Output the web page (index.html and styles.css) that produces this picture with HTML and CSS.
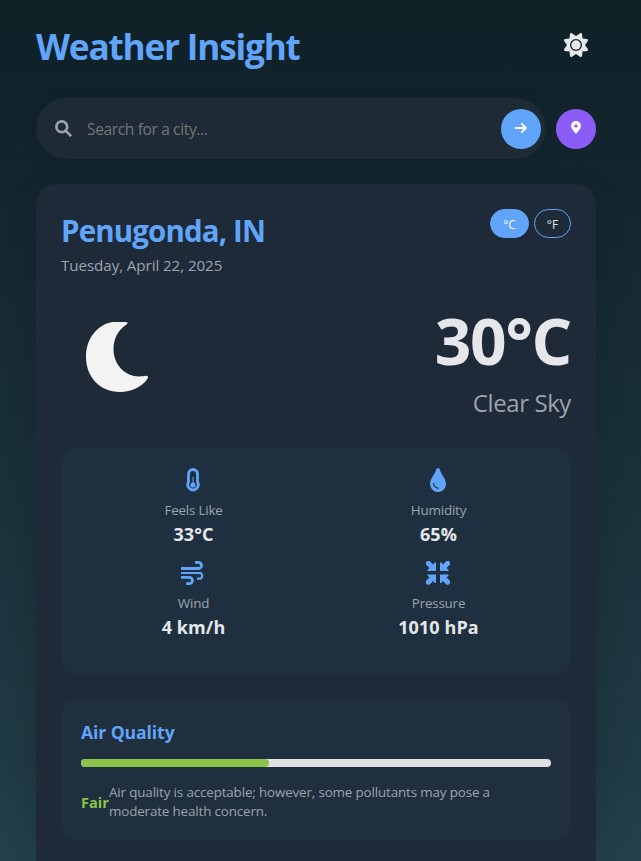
FILE: index.html
```html
<!DOCTYPE html>
<html lang="en">
<head>
<meta charset="utf-8">
<title>Weather Insight</title>
<link rel="stylesheet" href="styles.css">
</head>
<body>
<div class="container">
  <header class="header">
    <h1 class="title">Weather Insight</h1>
    <svg class="theme-icon" viewBox="0 0 24 24"><path fill="currentColor" fill-rule="evenodd" d="M6 .8Q7-.5 8 .2L12 3 16 .2Q17-.5 18 .8L18.500 5.500 23.200 6Q24.500 7 23.800 8L21 12 23.800 16Q24.500 17 23.200 18L18.500 18.500 18 23.200Q17 24.500 16 23.800L12 21 8 23.800Q7 24.500 6 23.200L5.500 18.500.8 18Q-.5 17 .2 16L3 12 .2 8Q-.5 7 .8 6L5.500 5.500zM12 6a6 6 0 1 0 0 12 6 6 0 0 0 0-12z"/><circle cx="12" cy="12" r="4.7" fill="currentColor"/></svg>
  </header>
  <div class="search-row">
    <div class="search-bar">
      <svg class="search-icon" viewBox="0 0 16 16"><circle cx="6.4" cy="6.4" r="5.1" fill="none" stroke="currentColor" stroke-width="2.6"/><path d="M10 10l5.2 5.2" stroke="currentColor" stroke-width="2.4"/></svg>
      <span class="placeholder">Search for a city...</span>
      <button class="round go"><svg width="12" height="12" viewBox="0 0 12 12"><path d="M0 6h10.5M6.3 1.3L11 6l-4.7 4.7" fill="none" stroke="#fff" stroke-width="1.8"/></svg></button>
    </div>
    <button class="round locate"><svg width="10" height="13" viewBox="0 0 10 13"><path fill="#fff" fill-rule="evenodd" d="M5 0a5 5 0 0 1 5 5c0 2.500-2.500 5-5 8C2.500 10 0 7.500 0 5a5 5 0 0 1 5-5zm0 3.300a1.700 1.700 0 1 0 0 3.400 1.700 1.700 0 0 0 0-3.400z"/></svg></button>
  </div>
  <main class="card">
    <div class="card-head">
      <div>
        <h2 class="city">Penugonda, IN</h2>
        <p class="date">Tuesday, April 22, 2025</p>
      </div>
      <div class="units"><button class="unit active">°C</button><button class="unit plain">°F</button></div>
    </div>
    <div class="current">
      <svg class="moon" viewBox="0 0 64 70"><path fill="#f3f3f3" d="M28 0h13c2 0 2 1.600.500 2.500C33 8 28.500 17 28.500 27c0 16 12 27.500 25.500 27.500 3 0 5-.500 7-.700 2-.200 2.500 1.500 1.500 3C57 65 46 70 35 70 15 70 1 55 1 35 1 16 13 2 28 0z"/></svg>
      <div class="reading"><div class="temp">30°C</div><div class="sky">Clear Sky</div></div>
    </div>
    <section class="details">
      <div class="detail"><svg viewBox="0 0 24 24"><path d="M7.500 14V6a4.500 4.500 0 0 1 9 0v8a5.200 5.200 0 1 1-9 0z" fill="none" stroke="currentColor" stroke-width="2.800"/><path d="M12 9v8" stroke="currentColor"/><circle cx="12" cy="17" r="2.600" fill="currentColor"/></svg><span class="label">Feels Like</span><strong>33°C</strong></div>
      <div class="detail"><svg viewBox="0 0 24 24"><path fill="currentColor" d="M12 0c1.200 0 1.700.700 2 2 1.200 4.500 6 8.500 6 14a8 8 0 0 1-16 0C4 10.500 8.800 6.500 10 2c.300-1.300.800-2 2-2z"/><path d="M7.500 15c.2 3 2.200 5 5.200 5.300" fill="none" stroke="#1e3040" stroke-width="1.200"/></svg><span class="label">Humidity</span><strong>65%</strong></div>
      <div class="detail"><svg viewBox="0 0 24 24"><g fill="none" stroke="currentColor" stroke-width="2.800"><path d="M0 7.500h17.500a3 3 0 0 0 0-6.100H14"/><path d="M0 12h19.500a3.200 3.200 0 0 1 0 5.700H16" stroke-width="2.200"/><path d="M0 16.300h8.300a3.150 3.150 0 0 1 0 6.300H5"/></g></svg><span class="label">Wind</span><strong>4 km/h</strong></div>
      <div class="detail"><svg viewBox="0 0 24 24"><g fill="currentColor"><path id="a" d="M10 1.500V10H1.500V8.800L3.500 7 .600 4.200a2.400 2.400 0 0 1 3.600-3.600L7 3.500 8.800 1.500z"/><use href="#a" transform="matrix(-1 0 0 1 24 0)"/><use href="#a" transform="matrix(1 0 0 -1 0 23.500)"/><use href="#a" transform="matrix(-1 0 0 -1 24 23.500)"/></g></svg><span class="label">Pressure</span><strong>1010 hPa</strong></div>
    </section>
    <section class="air">
      <h3 class="air-title">Air Quality</h3>
      <div class="track"><div class="fill"></div></div>
      <div class="air-info"><strong class="fair">Fair</strong><p class="desc">Air quality is acceptable; however, some pollutants may pose a<br>moderate health concern.</p></div>
    </section>
  </main>
</div>
</body>
</html>
```
FILE: styles.css
```css
* { box-sizing: border-box; margin: 0; padding: 0; }
body {
  height: 861px;
  font-family: "Open Sans", "Noto Sans", sans-serif;
  color: #e5e7eb;
  background: linear-gradient(#0f2027 0, #203a43 760px, #26464f 920px) no-repeat;
}
button { font-family: inherit; border: 0; }
svg { display: block; flex: none; }
.container { width: 560px; margin-left: 36px; padding-top: 19px; }
.header { height: 79px; display: flex; justify-content: space-between; padding-right: 8px; }
.title { font-size: 35.2px; line-height: 54px; color: #60a5fa; letter-spacing: -1.2px; white-space: nowrap; }
.theme-icon { width: 24px; height: 24px; margin-top: 14px; }
.search-row { display: flex; align-items: center; gap: 10px; height: 61px; }
.search-bar {
  width: 510px; height: 61px; padding: 0 5px 0 19px; border-radius: 31px;
  display: flex; align-items: center; background: #1e2a36;
  box-shadow: 0 4px 20px rgba(0,0,0,.1);
}
.search-icon { width: 17px; height: 17px; color: #9ca3af; }
.placeholder { margin-left: 15px; flex: 1; font-size: 15.5px; letter-spacing: -.35px; color: #757575; }
.round { width: 40px; height: 40px; border-radius: 50%; display: flex; align-items: center; justify-content: center; }
.go { background: #60a5fa; }
.locate { background: #8b5cf6; }
.go svg, .locate svg { margin-bottom: 2px; }
.card {
  margin-top: 25px; height: 677px; padding: 25px; border-radius: 20px 20px 0 0;
  background: #1e2a37; box-shadow: 0 8px 32px rgba(0,0,0,.17);
}
.card-head { display: flex; justify-content: space-between; height: 90px; }
.city { font-size: 29.5px; line-height: 44px; letter-spacing: -.87px; color: #60a5fa; white-space: nowrap; }
.date { font-size: 15.2px; line-height: 24px; letter-spacing: -.09px; color: #9ca3af; white-space: nowrap; }
.units { display: flex; gap: 5px; }
.unit { height: 29px; border-radius: 15px; border: 1px solid #60a5fa; color: #e5e7eb; background: none; font-size: 12px; padding-top: 2px; }
.active { width: 39px; background: #60a5fa; color: #fff; }
.plain { width: 37px; }
.current { display: flex; justify-content: space-between; height: 149px; }
.moon { width: 64px; height: 70px; margin: 23px 0 0 24px; }
.reading { text-align: right; }
.temp { font-size: 64px; font-weight: 700; line-height: 84px; letter-spacing: -1.3px; white-space: nowrap; }
.sky { font-size: 24px; line-height: 40px; letter-spacing: -.4px; color: #9ca3af; white-space: nowrap; }
.details {
  height: 226px; padding: 20px 10px; border-radius: 15px; background: #1e3040;
  display: grid; grid-template-columns: 1fr 1fr; grid-auto-rows: 93px; align-content: start;
}
.detail { display: flex; flex-direction: column; align-items: center; white-space: nowrap; }
.detail svg { width: 24px; height: 24px; margin-right: 1px; color: #60a5fa; }
.label { margin-top: 8px; font-size: 13.4px; line-height: 20px; letter-spacing: -.2px; color: #9ca3af; }
.detail strong { font-size: 18px; line-height: 28px; letter-spacing: .1px; }
.air { margin-top: 25px; height: 141px; padding: 19px 20px; border-radius: 15px; background: #1f2f3d; }
.air-title { font-size: 17.6px; line-height: 28px; letter-spacing: -.1px; color: #60a5fa; }
.track { height: 8px; margin-top: 13px; border-radius: 4px; background: #e0e0e0; }
.fill { width: 188px; height: 8px; border-radius: 4px; background: #8bc34a; }
.air-info { display: flex; align-items: center; margin-top: 16px; white-space: nowrap; }
.fair { width: 28px; font-size: 14.6px; line-height: 20px; color: #8bc34a; }
.desc { font-size: 13.4px; line-height: 19px; letter-spacing: -.145px; color: #9ca3af; }
```
